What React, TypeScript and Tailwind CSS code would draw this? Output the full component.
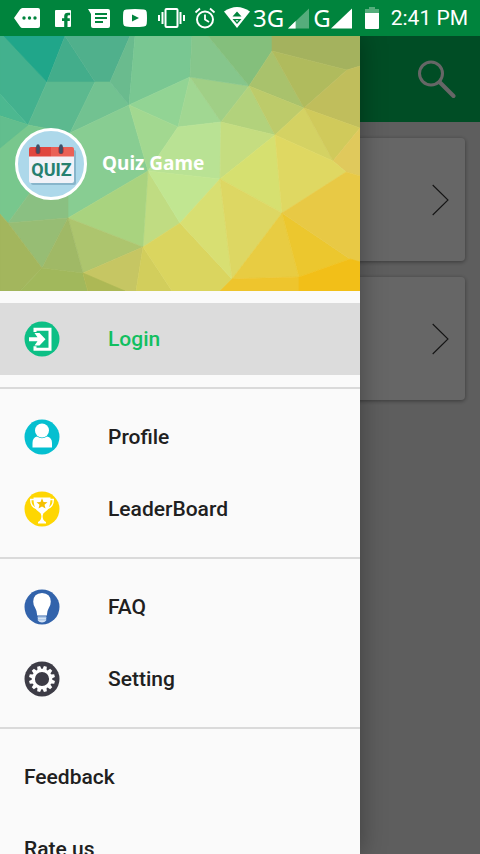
import React from 'react';

type Facet = [string, string];

// background mesh of the drawer header, drawn on a 360x255 canvas
const facets: Facet[] = [
  ['0,0 5,0 47,46 28,89 0,58', '#43b18e'],
  ['4,0 65,0 47,46', '#20a68a'],
  ['65,0 47,46 95,46', '#43ad8b'],
  ['65,0 130,0 110,46 95,46', '#50b08c'],
  ['47,46 95,46 70,97 28,89', '#5cb98f'],
  ['0,58 28,89 0,80', '#4cb890'],
  ['28,89 0,80 0,178 8,187 35,150 70,97', '#78c78d'],
  ['0,80 28,89 0,112', '#62be8e'],
  ['95,46 110,46 129,69 70,97', '#72c291'],
  ['130,0 110,46 129,69 135,0', '#6abb8e'],
  ['135,0 192,0 190,41 129,69', '#79c792'],
  ['190,41 129,69 178,91', '#92d494'],
  ['129,69 70,97 35,150 68,182 148,135', '#88cd92'],
  ['129,69 148,135 178,91', '#a2d890'],
  ['190,41 178,91 221,86', '#a1d792'],
  ['190,41 221,86 249,50', '#a0cf86'],
  ['192,0 190,41 249,50 208,0', '#86c68c'],
  ['208,0 249,50 272,15 272,0', '#84bf7c'],
  ['272,0 272,15 347,34 360,30 360,0', '#a4b25e'],
  ['272,15 249,50 304,72', '#a9c26c'],
  ['272,15 304,72 347,34', '#b0bb5d'],
  ['347,34 304,72 360,92 360,30', '#c0be5c'],
  ['249,50 221,86 275,99', '#b2d27c'],
  ['249,50 275,99 304,72', '#bdcb6a'],
  ['304,72 275,99 333,125', '#d4d263'],
  ['304,72 333,125 360,92', '#d0ca5b'],
  ['360,92 333,125 346,136 360,140', '#e0c95c'],
  ['178,91 221,86 220,143 148,135', '#b9e294'],
  ['221,86 275,99 220,143', '#c5dd80'],
  ['275,99 220,143 282,177', '#d6e070'],
  ['275,99 282,177 346,136 333,125', '#dfd862'],
  ['148,135 143,211 180,187', '#c0dc82'],
  ['148,135 180,187 220,143', '#c1e691'],
  ['68,182 143,211 148,135', '#a9d37f'],
  ['68,182 143,211 83,237', '#adc56e'],
  ['8,187 68,182 68,150 35,150', '#8ac082'],
  ['8,187 68,182 42,232', '#97bd74'],
  ['68,182 42,232 83,237', '#a0b966'],
  ['0,178 8,187 42,232 20,255 0,255', '#a3b65d'],
  ['42,232 20,255 88,255 83,237', '#a1b85c'],
  ['83,237 143,211 136,255 88,255', '#c6c663'],
  ['83,237 125,255 88,255', '#adb855'],
  ['143,211 136,255 172,255', '#d2ce5c'],
  ['180,187 143,211 172,255 220,255 232,243', '#dad55f'],
  ['180,187 220,143 232,243', '#d8df72'],
  ['220,143 282,177 232,243', '#ddd763'],
  ['282,177 232,243 299,241', '#e8cc42'],
  ['282,177 299,241 350,223', '#ecc72e'],
  ['282,177 346,136 360,140 360,228 350,223', '#e8c945'],
  ['232,243 299,241 299,255 220,255', '#eec52d'],
  ['299,241 350,223 360,226 360,255 299,255', '#f2bf18'],
];

const Mesh = () => (
  <svg viewBox="0 0 360 255" preserveAspectRatio="xMidYMid slice" className="absolute inset-0 h-full w-full" aria-hidden="true">
    {facets.map(([points, color]) => (
      <polygon key={points} points={points} fill={color} stroke={color} strokeWidth="0.6" />
    ))}
  </svg>
);

const Slot = ({ wide, children }: { wide?: boolean; children: React.ReactNode }) => (
  <span className={wide ? 'flex w-9 justify-center' : 'flex w-8 justify-center'}>{children}</span>
);

const StatusBar = () => (
  <div className="relative z-20 flex h-9 items-center bg-[#00843d] pl-[9px] pr-3 font-['Roboto',sans-serif] text-white">
    <Slot wide>
      <svg width="26" height="20" viewBox="0 0 26 20">
        <path d="M8.5 0H24a2 2 0 0 1 2 2v16a2 2 0 0 1-2 2H8.500q-1.500 0-2.500-1.500L0 10 6 1.500Q7 0 8.500 0z" fill="#fff" />
        <g fill="#00843d"><circle cx="10" cy="10" r="1.700" /><circle cx="15.500" cy="10" r="1.700" /><circle cx="21" cy="10" r="1.700" /></g>
      </svg>
    </Slot>
    <Slot wide>
      <svg width="16" height="17" viewBox="0 0 16 17">
        <path d="M1 0h14q1 0 1 1v15q0 1-1 1h-2.500v-6h2.300V8.300h-2.300V6.600q0-1.300 1.300-1.300h1.300V2.700h-2.200q-3.700 0-3.700 3.400v2.200H7V11h2.200v6H1q-1 0-1-1V1q0-1 1-1z" fill="#fff" />
      </svg>
    </Slot>
    <Slot wide>
      <svg width="22" height="19" viewBox="0 0 22 19">
        <path d="M0 0h20a2 2 0 0 1 2 2v15a2 2 0 0 1-2 2H5a2 2 0 0 1-2-2V5z" fill="#fff" />
        <path d="M7 5h12M7 9h12M7 13h8" stroke="#00843d" strokeWidth="2" />
      </svg>
    </Slot>
    <Slot wide>
      <svg width="24" height="18" viewBox="0 0 24 18">
        <path d="M3 .5Q12-.5 21 .5q2.500.3 2.700 2.500.6 6 0 12-.2 2.200-2.700 2.500-9 1-18 0Q.5 17.200.3 15q-.6-6 0-12Q.5.8 3 .5z" fill="#fff" />
        <path d="M9 5.500v7l7-3.500z" fill="#00843d" />
      </svg>
    </Slot>
    <Slot wide>
      <svg width="27" height="22" viewBox="0 0 27 22" fill="none" stroke="#fff" strokeWidth="2">
        <rect x="7.500" y="2" width="12" height="18" rx="1" />
        <path d="M4.500 5v12M22.500 5v12M1 8v6M26 8v6" />
      </svg>
    </Slot>
    <Slot>
      <svg width="22" height="22" viewBox="0 0 22 22" fill="none" stroke="#fff" strokeWidth="2">
        <circle cx="11" cy="12.500" r="8" />
        <path d="M11 7.500v5l4 2.500M1.500 5.500l4.500-4M20.500 5.500l-4.500-4" strokeWidth="1.800" />
      </svg>
    </Slot>
    <Slot>
      <svg width="26" height="22" viewBox="0 0 26 22">
        <path d="M0 4.500Q13-4.500 26 4.500L13 21z" fill="#fff" />
        <path d="M13 4.500l4.500 5h-9zM8.500 12h9L13 17z" fill="#00843d" />
        <path d="M11.500 13.200h3L13 15z" fill="#fff" />
      </svg>
    </Slot>
    <span className="font-['Noto_Sans',sans-serif] text-2xl leading-9">3G</span>
    <svg width="21" height="21" viewBox="0 0 22 21" className="ml-1">
      <path d="M0 21L22 0v21z" fill="#55ad7c" />
      <path d="M0 21l8-8v8z" fill="#fff" />
    </svg>
    <span className="ml-1 font-['Noto_Sans',sans-serif] text-2xl leading-9">G</span>
    <svg width="21" height="21" viewBox="0 0 22 21">
      <path d="M0 21L22 0v21z" fill="#fff" />
    </svg>
    <svg width="14" height="22" viewBox="0 0 14 22" className="ml-auto">
      <path d="M4 0h6v2h4v4H0V2h4z" fill="#55ad7c" />
      <path d="M0 6h14v15q0 1-1 1H1q-1 0-1-1z" fill="#fff" />
    </svg>
    <time className="ml-3 whitespace-nowrap text-[21px] leading-9">2:41 PM</time>
  </div>
);

const badge = { width: 36, height: 36, viewBox: '0 0 36 36', 'aria-hidden': true };

const LoginIcon = () => (
  <svg {...badge}>
    <circle cx="18" cy="18" r="17.500" fill="#0cbf85" />
    <path d="M11 11V8.200h15v20H11v-3" fill="none" stroke="#fff" strokeWidth="3" />
    <path d="M5 16.300h8.500l-3-4.300h5l6 6.300-6 6.300h-5l3-4.300H5z" fill="#fff" />
  </svg>
);

const ProfileIcon = () => (
  <svg {...badge}>
    <circle cx="18" cy="18" r="17.500" fill="#05bfd0" />
    <circle cx="18" cy="11.500" r="7" fill="#fff" />
    <path d="M8.500 28.500V24q0-5.500 4.500-6.500 5 3.500 10 0 5 1 5 6.500v4.500z" fill="#fff" />
  </svg>
);

const TrophyIcon = () => (
  <svg {...badge}>
    <circle cx="18" cy="18" r="17.500" fill="#fed602" />
    <path d="M10.500 8.500H6.700q0 7.500 6 9M25.500 8.500h3.800q0 7.500-6 9" fill="none" stroke="#fff" strokeWidth="1.400" />
    <path d="M9.500 6.500h17q0 12-5.500 14.500-2.200 1-2.400 4 0 4.500 3.400 6v1.500h-8V31q3.400-1.500 3.400-6-.2-3-2.400-4-5.500-2.500-5.500-14.500z" fill="#fff" />
    <path d="M18 7.200l1.500 3.700 4 .3-3 2.500 1 3.900-3.500-2.100-3.500 2.100 1-3.900-3-2.500 4-.3z" fill="#f5c000" />
  </svg>
);

const BulbIcon = () => (
  <svg {...badge}>
    <circle cx="18" cy="18" r="17.500" fill="#3263ab" />
    <path d="M18 4q8.500.3 8.800 8.500 0 3.500-2 6.500-1.800 2.800-2 7.500h-9.600q-.2-4.700-2-7.500-2-3-2-6.500Q9.500 4.300 18 4z" fill="#fff" />
    <path d="M13.800 27.500h8.400v4q-1.500 2-4.200 2t-4.200-2z" fill="#d4e3f5" />
    <path d="M13.500 28.300h9M14 30.800h8" stroke="#8fb1dc" strokeWidth=".7" />
  </svg>
);

const GearIcon = () => (
  <svg {...badge}>
    <circle cx="18" cy="18" r="17.500" fill="#3d3c46" />
    {[0, 30, 60, 90, 120, 150, 180, 210, 240, 270, 300, 330].map((angle) => (
      <path key={angle} d="M15.900 8.500l.6-3.500h3l.6 3.500z" fill="#fff" transform={`rotate(${angle + 15} 18 18)`} />
    ))}
    <circle cx="18" cy="18" r="8.700" fill="none" stroke="#fff" strokeWidth="3.200" />
  </svg>
);

const groups = [
  [{ label: 'Login', icon: LoginIcon, active: true }],
  [
    { label: 'Profile', icon: ProfileIcon },
    { label: 'LeaderBoard', icon: TrophyIcon },
  ],
  [
    { label: 'FAQ', icon: BulbIcon },
    { label: 'Setting', icon: GearIcon },
  ],
  [{ label: 'Feedback' }, { label: 'Rate us' }],
] as { label: string; icon?: React.FC; active?: boolean }[][];

const QuizLogo = () => (
  <svg width="72" height="72" viewBox="0 0 72 72" role="img" aria-label="Quiz" className="shrink-0">
    <circle cx="36" cy="36" r="34.500" fill="#add8ea" stroke="#fff" strokeWidth="3" />
    <rect x="16" y="22" width="45" height="35" rx="2" fill="#6f9fb5" opacity=".6" />
    <path d="M14 28h45v25q0 2-2 2H16q-2 0-2-2z" fill="#f1f2f8" />
    <path d="M16 19h20v9.500H14V21q0-2 2-2z" fill="#e0473f" />
    <path d="M36 19h21q2 0 2 2v7.500H36z" fill="#ea6156" />
    <path d="M23 20.500v3M46 20.500v3" stroke="#a52f35" strokeWidth="5" strokeLinecap="round" />
    <path d="M23 18v6M46 18v6" stroke="#3d5068" strokeWidth="3.400" strokeLinecap="round" />
    <text x="36.500" y="48" textAnchor="middle" fontSize="18" fontWeight="700" fill="#26806f" className="font-['Liberation_Sans_Narrow','Roboto',sans-serif]">
      QUIZ
    </text>
  </svg>
);

const Drawer = () => (
  <aside className="absolute inset-y-0 left-0 z-10 w-3/4 overflow-hidden bg-[#fafafa] shadow-[0_0_24px_rgba(0,0,0,0.35)]">
    <div className="relative flex h-[255px] items-center overflow-hidden">
      <Mesh />
      <div className="relative flex items-center gap-[15px] px-[15px]">
        <QuizLogo />
        <h1 className="whitespace-nowrap font-['Noto_Sans',sans-serif] text-[19px] font-bold text-white">Quiz Game</h1>
      </div>
    </div>
    <nav className="divide-y-2 divide-[#dadada]">
      {groups.map((items, index) => (
        <ul key={index} className="py-3">
          {items.map(({ label, icon: Icon, active }) => (
            <li key={label}>
              <a
                href="#"
                className={`flex h-[72px] items-center gap-12 px-6 text-[21px] font-medium leading-7 ${
                  active ? 'bg-[#dcdcdc] text-[#12bf60]' : 'text-[#202020]'
                }`}
              >
                {Icon && <Icon />}
                {label}
              </a>
            </li>
          ))}
        </ul>
      ))}
    </nav>
  </aside>
);

const Card = () => (
  <button
    aria-label="Open"
    className="flex h-[123px] w-full items-center justify-end rounded bg-white pr-4 shadow-[0_1px_4px_rgba(0,0,0,0.4)]"
  >
    <svg width="17" height="32" viewBox="0 0 17 32" fill="none" stroke="#333" strokeWidth="1.100" aria-hidden="true">
      <path d="M.7 1l15.300 15L.7 31" />
    </svg>
  </button>
);

const App = () => {
  return (
    <div className="flex h-screen flex-col overflow-hidden font-['Roboto',sans-serif]">
      <StatusBar />
      <div className="relative flex-1 bg-[#ebebeb]">
        <header className="flex h-[86px] items-center justify-end bg-[#00c05c] px-6">
          <button aria-label="Search">
            <svg width="39" height="39" viewBox="0 0 39 39" fill="none" stroke="#fff" strokeWidth="3">
              <circle cx="14" cy="13.500" r="11.500" />
              <path d="M22.500 22L36.500 36" strokeWidth="4" strokeLinecap="round" />
            </svg>
          </button>
        </header>
        <main className="flex flex-col gap-4 px-[15px] py-4">
          <Card />
          <Card />
        </main>
        <div className="absolute inset-0 bg-black/60" />
        <Drawer />
      </div>
    </div>
  );
};

export default App;
